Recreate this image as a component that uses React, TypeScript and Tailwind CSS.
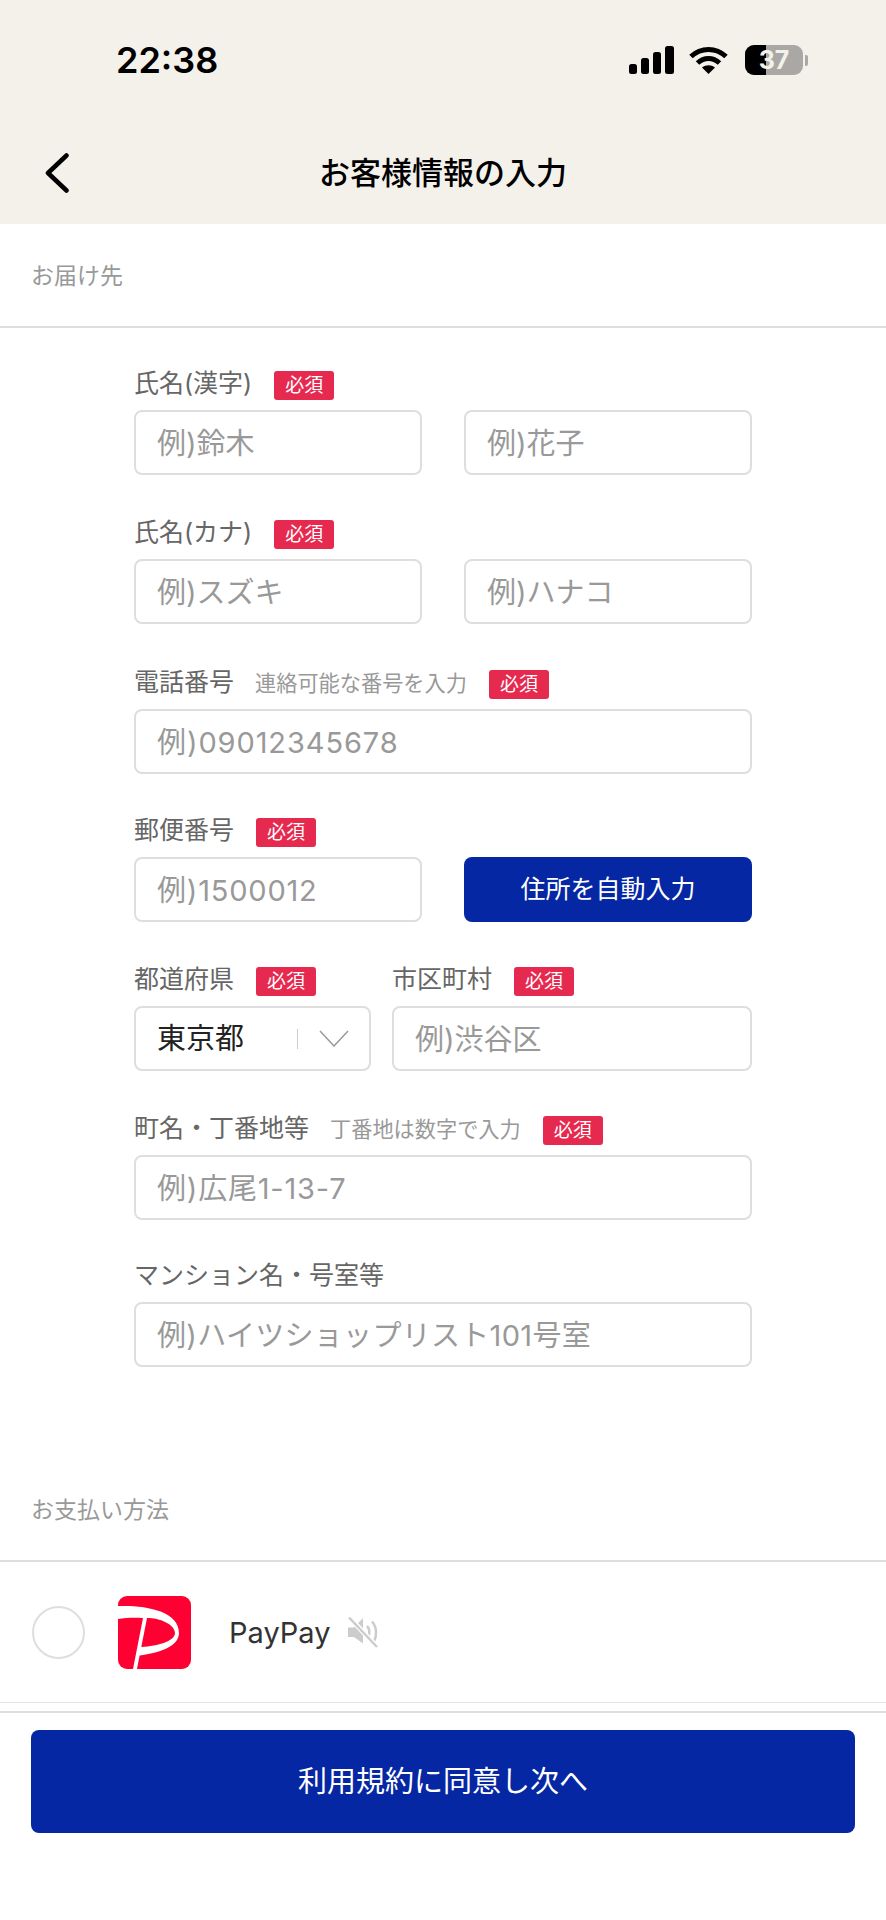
const Required = () => (
  <span className="flex h-[29px] w-[60px] shrink-0 items-center justify-center rounded-[3px] bg-[#e62a4f] text-[19px] leading-none text-white">
    必須
  </span>
);

const Label = ({ text, hint, required = true }: { text: string; hint?: string; required?: boolean }) => (
  <div className="mb-[10px] flex h-[29px] items-center">
    <span className="pb-[4px] text-[25px] leading-none whitespace-nowrap text-[#666666]">{text}</span>
    {hint && <span className="ml-[21px] pb-[2px] text-[21.2px] leading-none whitespace-nowrap text-[#999999]">{hint}</span>}
    {required && (
      <span className="ml-[22px]">
        <Required />
      </span>
    )}
  </div>
);

const Input = ({ placeholder, className = "" }: { placeholder: string; className?: string }) => (
  <div
    className={`flex h-[65px] items-center rounded-[8px] border-2 border-[#dedede] bg-white pt-[2px] pl-[21px] text-[29px] leading-none whitespace-nowrap text-[#999999] ${className}`}
  >
    {placeholder}
  </div>
);

const SectionTitle = ({ children }: { children: string }) => (
  <div className="flex h-[104px] items-center border-b-2 border-[#dedede] pt-[3px] pl-[31px] text-[23px] leading-none text-[#999999]">
    {children}
  </div>
);

const StatusBar = () => (
  <div className="flex h-[120px] items-center pr-[78px] pl-[116px]">
    <span className="text-[36px] leading-none font-semibold text-black">22:38</span>
    <div className="ml-auto flex items-center">
      {/* signal */}
      <svg width="45" height="28" viewBox="0 0 45 28" fill="black">
        <rect x="0" y="18" width="8" height="10" rx="2.5" />
        <rect x="12" y="12" width="8" height="16" rx="2.5" />
        <rect x="24" y="6" width="8" height="22" rx="2.5" />
        <rect x="36" y="0" width="9" height="28" rx="2.5" />
      </svg>
      {/* wifi */}
      <svg width="39" height="28" viewBox="0 0 39 28" fill="none" stroke="black" strokeWidth="5" className="ml-[15px]">
        <path d="M2 10.5C12 1 27 1 37 10.5" />
        <path d="M8.5 17C15 11 24 11 30.5 17" />
        <path d="M19.5 28L13 21.5C17 18.5 22 18.5 26 21.5Z" fill="black" stroke="none" />
      </svg>
      {/* battery */}
      <div className="relative ml-[17px] flex h-[30px] w-[58px] items-center justify-center overflow-hidden rounded-[9px] bg-[#a9a8a4]">
        <div className="absolute inset-y-0 left-0 w-[21px] bg-black" />
        <span className="relative text-[25px] leading-none font-bold text-[#f4f1ea]">37</span>
      </div>
      <div className="ml-[2px] h-[11px] w-[3px] rounded-r-[2px] bg-[#a9a8a4]" />
    </div>
  </div>
);

const NavBar = () => (
  <div className="relative flex h-[104px] items-center justify-center">
    <svg width="24" height="40" viewBox="0 0 24 40" fill="none" stroke="black" strokeWidth="4.5" strokeLinecap="round" strokeLinejoin="round" className="absolute top-[33px] left-[45px]">
      <path d="M21.5 2.5L3 20L21.5 37.5" />
    </svg>
    <h1 className="text-[31px] leading-none font-medium text-black">お客様情報の入力</h1>
  </div>
);

const PayPayLogo = () => (
  <svg width="73" height="73" viewBox="0 0 73 73" className="shrink-0">
    <rect width="73" height="73" rx="9" fill="#ff0033" />
    <path
      d="M0 10C28 9 61 15 61 37C61 50 42 57 21.6 59.5L19 73H15L25 22C17 21.5 8 21.5 0 23Z"
      fill="white"
    />
    <path d="M29 22C42 22 56 28 57 37C57 45 40 50 23.3 51Z" fill="#ff0033" />
  </svg>
);

const MuteIcon = () => (
  <svg width="31" height="31" viewBox="0 0 31 31" fill="none" className="ml-[17px] shrink-0">
    <path d="M0 10.5H6L15 1V26.5L6 20H0Z" fill="#cccccc" />
    <path d="M19 9C22 12 22 17 20 20" stroke="#cccccc" strokeWidth="2.5" />
    <path d="M24 4.5C29 10 29 19 26 24.5" stroke="#cccccc" strokeWidth="2.5" />
    <path d="M2 1L29 30" stroke="white" strokeWidth="5" />
    <path d="M1 0.5L29 30" stroke="#cccccc" strokeWidth="2.5" />
  </svg>
);

export default function App() {
  return (
    <div className="flex h-[1920px] w-[886px] flex-col bg-white font-[family-name:Inter,'Noto_Sans_CJK_JP',sans-serif]">
      <header className="bg-[#f4f1ea]">
        <StatusBar />
        <NavBar />
      </header>

      <SectionTitle>お届け先</SectionTitle>

      <form className="ml-[134px] w-[618px] pt-[43px] pb-[91px]">
        <div className="mb-[45px]">
          <Label text="氏名(漢字)" />
          <div className="grid grid-cols-2 gap-[42px]">
            <Input placeholder="例)鈴木" />
            <Input placeholder="例)花子" />
          </div>
        </div>
        <div className="mb-[46px]">
          <Label text="氏名(カナ)" />
          <div className="grid grid-cols-2 gap-[42px]">
            <Input placeholder="例)スズキ" />
            <Input placeholder="例)ハナコ" />
          </div>
        </div>
        <div className="mb-[44px]">
          <Label text="電話番号" hint="連絡可能な番号を入力" />
          <Input placeholder="例)09012345678" className="tracking-[0.9px]" />
        </div>
        <div className="mb-[45px]">
          <Label text="郵便番号" />
          <div className="grid grid-cols-2 gap-[42px]">
            <Input placeholder="例)1500012" className="tracking-[0.8px]" />
            <button type="button" className="h-[65px] rounded-[8px] bg-[#0527a3] text-[25px] leading-none text-white">
              住所を自動入力
            </button>
          </div>
        </div>
        <div className="mb-[45px] flex gap-[21px]">
          <div className="w-[237px] shrink-0">
            <Label text="都道府県" />
            <div className="flex h-[65px] items-center rounded-[8px] border-2 border-[#dedede] pl-[21px] text-[29px] leading-none text-[#222222]">
              東京都
              <span className="ml-auto h-[20px] w-[1px] bg-[#cccccc]" />
              <svg width="30" height="17" viewBox="0 0 30 17" fill="none" stroke="#999999" strokeWidth="1.5" className="mr-[20px] ml-[21px]">
                <path d="M1 1L15 16L29 1" />
              </svg>
            </div>
          </div>
          <div className="min-w-0 flex-1">
            <Label text="市区町村" />
            <Input placeholder="例)渋谷区" />
          </div>
        </div>
        <div className="mb-[43px]">
          <Label text="町名・丁番地等" hint="丁番地は数字で入力" />
          <Input placeholder="例)広尾1-13-7" className="tracking-[0.8px]" />
        </div>
        <div>
          <Label text="マンション名・号室等" required={false} />
          <Input placeholder="例)ハイツショップリスト101号室" className="tracking-[0.3px]" />
        </div>
      </form>

      <SectionTitle>お支払い方法</SectionTitle>

      <div className="flex h-[141px] items-center border-b border-[#e4e4e4] pl-[32px]">
        <span className="h-[53px] w-[53px] shrink-0 rounded-full border-2 border-[#dedede]" />
        <span className="ml-[33px]">
          <PayPayLogo />
        </span>
        <span className="ml-[38px] text-[29px] leading-none text-[#333333]">PayPay</span>
        <MuteIcon />
      </div>

      <div className="mt-[8px] flex-1 border-t-2 border-[#dedede] px-[31px] pt-[17px]">
        <button type="button" className="h-[103px] w-full rounded-[8px] bg-[#0527a3] text-[29px] leading-none text-white">
          利用規約に同意し次へ
        </button>
      </div>
    </div>
  );
}
